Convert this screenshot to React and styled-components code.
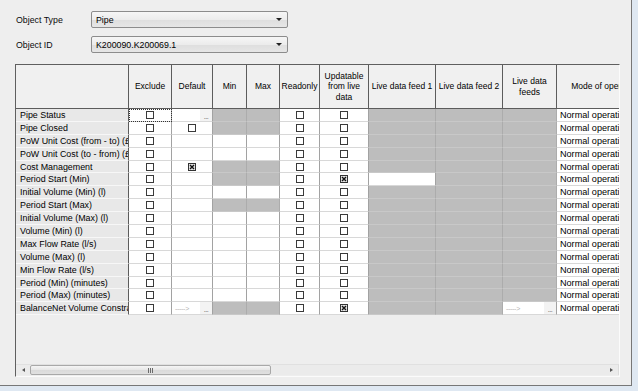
import React from "react";
import styled, { createGlobalStyle } from "styled-components";

const GlobalStyle = createGlobalStyle`
  html, body {
    margin: 0;
    padding: 0;
    background: #dfe8f2;
  }
  body {
    font-family: "Liberation Sans", Arial, sans-serif;
    font-size: 8.5px;
    color: #111;
  }
  * { box-sizing: border-box; }
`;

const Window = styled.div`
  width: 632px;
  height: 386px;
  background: #eeeeee;
  border-right: 1px solid #777;
  border-bottom: 1px solid #777;
  padding-top: 11px;
  display: flex;
  flex-direction: column;
`;

const FieldRow = styled.div`
  display: flex;
  align-items: center;
  height: 17px;
  padding-left: 16px;
  & + & {
    margin-top: 8px;
  }
`;

const FieldLabel = styled.label`
  width: 75px;
  color: #0a0a0a;
  font-size: 8.8px;
`;

const Combo = styled.div`
  width: 197px;
  height: 17px;
  border: 1px solid #8c8c8c;
  border-radius: 2px;
  background: linear-gradient(#f6f6f6, #ececec 50%, #dedede 51%, #e6e6e6);
  display: flex;
  align-items: center;
  justify-content: space-between;
  padding: 0 5px 0 4px;
  color: #000;
  font-size: 8.8px;
`;

const ComboArrow = styled.span`
  width: 0;
  height: 0;
  border-left: 3px solid transparent;
  border-right: 3px solid transparent;
  border-top: 3px solid #222;
`;

const GridBox = styled.div`
  margin: 11px 0 0 15px;
  width: 605px;
  height: 313px;
  border-top: 1px solid #5f5f5f;
  border-left: 1px solid #5f5f5f;
  border-right: 1px solid #fbfbfb;
  border-bottom: 1px solid #fbfbfb;
  display: flex;
  flex-direction: column;
  overflow: hidden;
`;

const Table = styled.div`
  display: grid;
  grid-template-columns: 113px 43px 41px 34px 33px 40px 49px 67px 67px 54px 98px;
  grid-template-rows: 44px;
  grid-auto-rows: 12.9px;
  width: max-content;
`;

const HeadCell = styled.div`
  background: #f0f0f0;
  border-right: 1px solid #5c5c5c;
  border-bottom: 1px solid #5c5c5c;
  display: flex;
  align-items: center;
  justify-content: center;
  text-align: center;
  line-height: 10.5px;
  padding: 0 3px;
  color: #000;
  white-space: ${(p) => (p.$wrap ? "normal" : "nowrap")};
  overflow: hidden;
`;

const RowHead = styled.div`
  background: #e8e8e8;
  border-right: 1px solid #5c5c5c;
  border-bottom: 1px solid #f7f7f7;
  padding-left: 4px;
  display: flex;
  align-items: center;
  white-space: nowrap;
  overflow: hidden;
  color: #000;
  font-size: 8.9px;
`;

const Cell = styled.div`
  position: relative;
  background: ${(p) => (p.$gray ? "#bdbdbd" : "#ffffff")};
  border-right: 1px solid ${(p) => (p.$gray ? "#acacac" : "#a2a2a2")};
  border-bottom: 1px solid ${(p) => (p.$gray ? "#c8c8c8" : "#d8d8d8")};
  display: flex;
  align-items: center;
  justify-content: ${(p) => (p.$left ? "flex-start" : "center")};
  padding-left: ${(p) => (p.$left ? "3px" : "0")};
  white-space: nowrap;
  overflow: hidden;
  color: #000;
  font-size: 9.1px;
  outline: ${(p) => (p.$focus ? "1px dotted #333" : "none")};
  outline-offset: -1px;
`;

const Box = styled.span`
  width: 8px;
  height: 8px;
  border: 1px solid #3a3a3a;
  background: #fff;
  display: inline-block;
`;

const CheckedBox = styled.svg`
  width: 8px;
  height: 8px;
  display: block;
`;

const ArrowText = styled.span`
  color: #b4b4b4;
  font-size: 7px;
  letter-spacing: -0.3px;
`;

const DotsButton = styled.span`
  position: absolute;
  right: 0;
  top: 0;
  bottom: 0;
  width: 12px;
  background: #f3f3f3;
  color: #555;
  font-size: 7px;
  line-height: 16px;
  text-align: center;
  letter-spacing: -0.5px;
`;

const Spacer = styled.div`
  flex: 1;
`;

const ScrollBar = styled.div`
  display: flex;
  align-items: stretch;
  height: 11px;
  margin: 0 0 1px 0;
  width: 603px;
  background: #ebebeb;
  border-top: 1px solid #e0e0e0;
  border-right: 1px solid #dcdcdc;
`;

const ScrollButton = styled.div`
  width: 14px;
  display: flex;
  align-items: center;
  justify-content: center;
`;

const Tri = styled.span`
  width: 0;
  height: 0;
  border-top: 2.5px solid transparent;
  border-bottom: 2.5px solid transparent;
  ${(p) =>
    p.$dir === "left"
      ? "border-right: 3px solid #555;"
      : "border-left: 3px solid #555;"}
`;

const Thumb = styled.div`
  width: 241px;
  border: 1px solid #a8a8a8;
  border-radius: 2px;
  background: linear-gradient(#f5f5f5, #e6e6e6 50%, #dadada 51%, #e0e0e0);
  display: flex;
  align-items: center;
  justify-content: center;
  gap: 1px;
`;

const Grip = styled.span`
  width: 1px;
  height: 5px;
  background: #6a6a6a;
`;

const Track = styled.div`
  flex: 1;
`;

const CheckBox = ({ checked }) =>
  checked ? (
    <CheckedBox viewBox="0 0 8 8">
      <rect x="0.5" y="0.5" width="7" height="7" fill="#e4e4e4" stroke="#333" />
      <path d="M2 2 L6 6 M6 2 L2 6" stroke="#111" strokeWidth="1.4" />
    </CheckedBox>
  ) : (
    <Box />
  );

const HEADERS = [
  { text: "" },
  { text: "Exclude" },
  { text: "Default" },
  { text: "Min" },
  { text: "Max" },
  { text: "Readonly" },
  { text: "Updatable from live data", wrap: true },
  { text: "Live data feed 1" },
  { text: "Live data feed 2" },
  { text: "Live data feeds", wrap: true },
  { text: "Mode of operation" },
];

const ROWS = [
  { name: "Pipe Status", def: "dots", mm: true, focus: true },
  { name: "Pipe Closed", def: "check", mm: true },
  { name: "PoW Unit Cost (from - to) (£/m)" },
  { name: "PoW Unit Cost (to - from) (£/m)" },
  { name: "Cost Management", def: "checked", mm: true },
  { name: "Period Start (Min)", mm: true, upd: true, feed1: true },
  { name: "Initial Volume (Min) (l)" },
  { name: "Period Start (Max)", mm: true },
  { name: "Initial Volume (Max) (l)" },
  { name: "Volume (Min) (l)" },
  { name: "Max Flow Rate (l/s)" },
  { name: "Volume (Max) (l)" },
  { name: "Min Flow Rate (l/s)" },
  { name: "Period (Min) (minutes)" },
  { name: "Period (Max) (minutes)" },
  { name: "BalanceNet Volume Constraint", def: "arrow", mm: true, upd: true, feeds: true },
];

const DefaultCell = ({ kind }) => {
  if (kind === "check")
    return (
      <Cell>
        <CheckBox />
      </Cell>
    );
  if (kind === "checked")
    return (
      <Cell>
        <CheckBox checked />
      </Cell>
    );
  if (kind === "dots")
    return (
      <Cell>
        <DotsButton>...</DotsButton>
      </Cell>
    );
  if (kind === "arrow")
    return (
      <Cell $left>
        <ArrowText>-----&gt;</ArrowText>
        <DotsButton>...</DotsButton>
      </Cell>
    );
  return <Cell />;
};

const App = () => {
  return (
    <>
      <GlobalStyle />
      <Window>
        <FieldRow>
          <FieldLabel>Object Type</FieldLabel>
          <Combo>
            <span>Pipe</span>
            <ComboArrow />
          </Combo>
        </FieldRow>
        <FieldRow>
          <FieldLabel>Object ID</FieldLabel>
          <Combo>
            <span>K200090.K200069.1</span>
            <ComboArrow />
          </Combo>
        </FieldRow>

        <GridBox>
          <Table>
            {HEADERS.map((h, i) => (
              <HeadCell key={i} $wrap={h.wrap}>
                {h.text}
              </HeadCell>
            ))}
            {ROWS.map((r) => (
              <React.Fragment key={r.name}>
                <RowHead>{r.name}</RowHead>
                <Cell $focus={r.focus}>
                  <CheckBox />
                </Cell>
                <DefaultCell kind={r.def} />
                <Cell $gray={r.mm} />
                <Cell $gray={r.mm} />
                <Cell>
                  <CheckBox />
                </Cell>
                <Cell>
                  <CheckBox checked={r.upd} />
                </Cell>
                <Cell $gray={!r.feed1} />
                <Cell $gray />
                {r.feeds ? (
                  <Cell $left>
                    <ArrowText>-----&gt;</ArrowText>
                    <DotsButton>...</DotsButton>
                  </Cell>
                ) : (
                  <Cell $gray />
                )}
                <Cell $left>Normal operation</Cell>
              </React.Fragment>
            ))}
          </Table>
          <Spacer />
          <ScrollBar>
            <ScrollButton>
              <Tri $dir="left" />
            </ScrollButton>
            <Thumb>
              <Grip />
              <Grip />
              <Grip />
            </Thumb>
            <Track />
            <ScrollButton>
              <Tri $dir="right" />
            </ScrollButton>
          </ScrollBar>
        </GridBox>
      </Window>
    </>
  );
};

export default App;
